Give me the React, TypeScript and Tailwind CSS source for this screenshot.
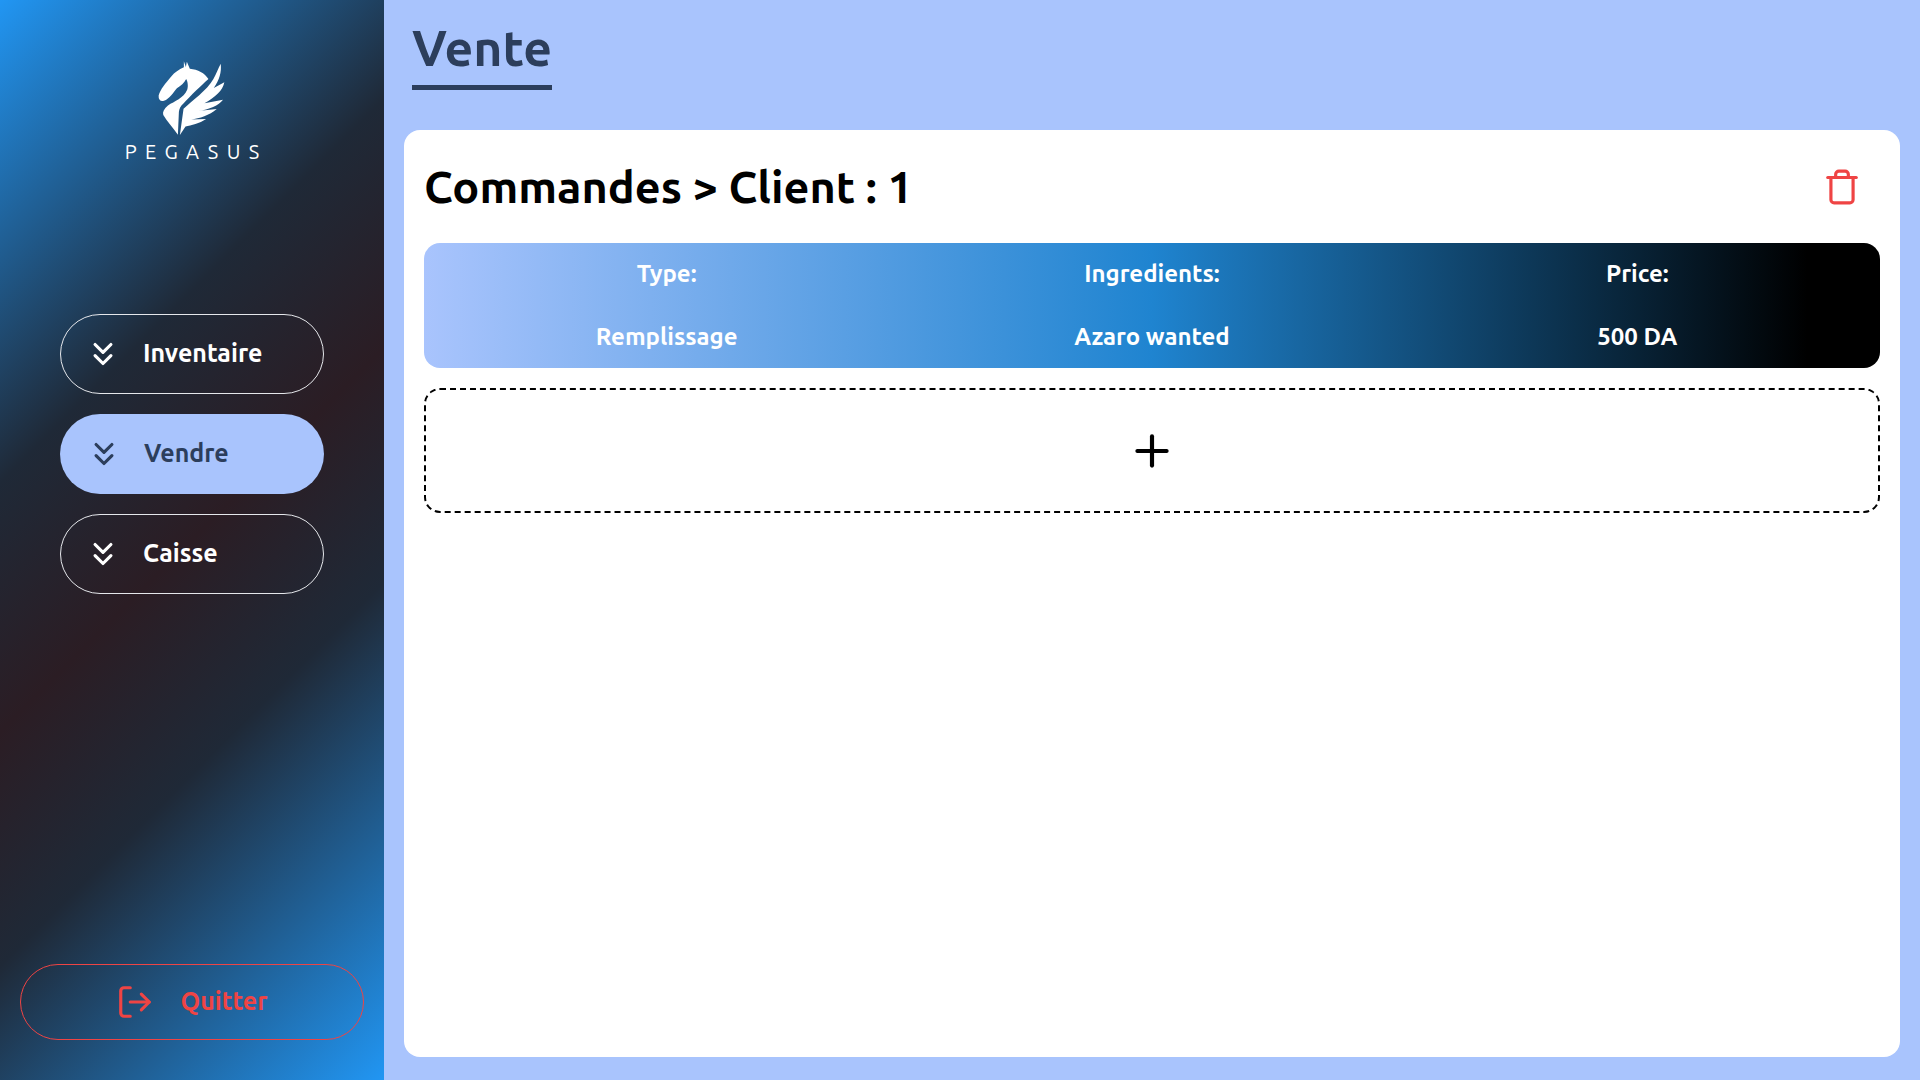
import { ChevronsDown, LogOut, Plus, Trash } from "lucide-react";

const font = { };

function Logo() {
  return (
    <div className="flex flex-col items-center">
      <svg viewBox="290 55 215 235" className="w-[72px] h-[78px]" fill="white">
        <path d="M373 62 L379 79 L382 63 L391 84 C415 86 436 97 447 115 C425 135 395 163 371 190 C363 197 359 205 358 215 L355 283 C340 262 322 243 311 224 C308 215 313 205 325 195 C345 183 372 173 383 148 C387 135 384 122 380 115 C374 128 364 134 352 143 C342 155 330 175 313 181 C303 184 296 178 297 165 C302 147 318 128 335 108 C345 95 358 87 373 80 Z" />
        <path d="M361 284 L372 205 C398 180 442 150 462 115 C470 100 477 82 484 69 C487 95 480 118 463 142 L495 125 C490 150 468 170 435 188 L491 178 C478 195 450 208 415 212 L472 206 C450 225 420 235 395 237 L440 236 C420 250 395 255 378 258 Z" />
      </svg>
      <div className="mt-[3px] text-white text-[20px] leading-[24px] tracking-[0.42em] pl-[0.42em] font-normal">PEGASUS</div>
    </div>
  );
}

function NavButton({ label, active }: { label: string; active?: boolean }) {
  return (
    <div
      className={
        active
          ? "h-20 w-[264px] rounded-full bg-[#a9c4fd] text-[#2c3e5c] flex items-center pl-[25px]"
          : "h-20 w-[264px] rounded-full border border-[#e5e7eb] text-white flex items-center pl-[23px]"
      }
    >
      <ChevronsDown size={38} strokeWidth={2} className="shrink-0" />
      <span className="ml-[21px] text-[25px] font-bold">{label}</span>
    </div>
  );
}

function Cell({ children }: { children: string }) {
  return <div className="flex items-center justify-center text-white text-[24px] font-bold">{children}</div>;
}

export default function App() {
  return (
    <div className="flex w-[1920px] h-[1080px] overflow-hidden bg-[#a9c4fd] font-['Ubuntu','Noto_Sans',sans-serif]" style={font}>
      <aside className="w-[384px] h-full flex flex-col items-center bg-[linear-gradient(135deg,#2196f3_0%,#1f2937_33%,#2b1d24_50%,#1f2937_66%,#2196f3_100%)]">
        <div className="mt-[59px]"><Logo /></div>
        <nav className="mt-[150px] flex flex-col gap-5">
          <NavButton label="Inventaire" />
          <NavButton label="Vendre" active />
          <NavButton label="Caisse" />
        </nav>
        <div className="mt-auto mb-10 w-[344px] h-[76px] rounded-full border border-[#ef4444] text-[#ef4444] flex items-center justify-center">
          <LogOut size={38} strokeWidth={2} className="shrink-0" />
          <span className="ml-[26px] text-[25px] font-bold">Quitter</span>
        </div>
      </aside>
      <main className="flex-1 flex flex-col pl-5 pr-5 pb-[23px]">
        <div className="h-[130px] pl-2">
          <h1 className="inline-block h-[90px] border-b-[5px] border-[#2c3e5c] text-[#2c3e5c] text-[50px] leading-[95px] font-bold">Vente</h1>
        </div>
        <section className="flex-1 rounded-2xl bg-white px-5 flex flex-col">
          <div className="h-[113px] flex items-center justify-between pr-[19px]">
            <h2 className="text-black text-[45px] font-bold">Commandes &gt; Client : 1</h2>
            <Trash size={38} strokeWidth={2} className="text-[#ef4444]" />
          </div>
          <div className="h-[125px] rounded-2xl grid grid-cols-3 grid-rows-2 bg-[linear-gradient(to_right,#a9c4fd_0%,#1f84d0_50%,#000000_95%)]">
            <Cell>Type:</Cell>
            <Cell>Ingredients:</Cell>
            <Cell>Price:</Cell>
            <Cell>Remplissage</Cell>
            <Cell>Azaro wanted</Cell>
            <Cell>500 DA</Cell>
          </div>
          <div className="mt-5 h-[125px] rounded-2xl border-2 border-dashed border-black flex items-center justify-center">
            <Plus size={50} strokeWidth={2} className="text-black" />
          </div>
        </section>
      </main>
    </div>
  );
}
